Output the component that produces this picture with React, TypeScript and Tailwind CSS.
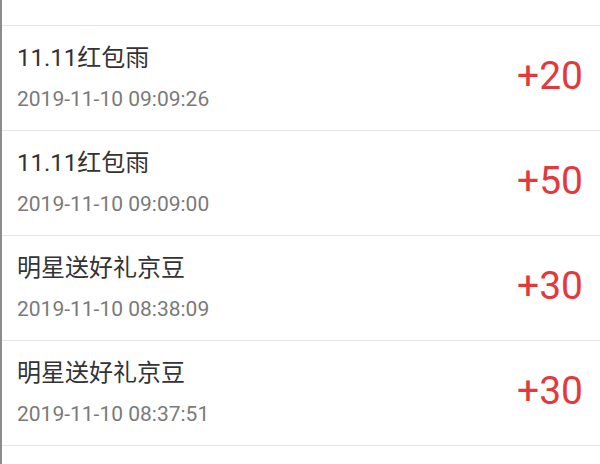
const records = [
  { title: '11.11红包雨', time: '2019-11-10 09:09:26', amount: '+20' },
  { title: '11.11红包雨', time: '2019-11-10 09:09:00', amount: '+50' },
  { title: '明星送好礼京豆', time: '2019-11-10 08:38:09', amount: '+30' },
  { title: '明星送好礼京豆', time: '2019-11-10 08:37:51', amount: '+30' },
];

export default function App() {
  return (
    <div
      className="w-[600px] h-[464px] overflow-hidden bg-white border-l-2 border-[#8c8c8c]"
      style={{ fontFamily: "Roboto, 'Noto Sans CJK SC', sans-serif" }}
    >
      <div className="h-[26px] border-b border-[#e6e6e6]" />
      {records.map((r, i) => (
        <div
          key={i}
          className="h-[105px] border-b border-[#e6e6e6] flex items-center justify-between pl-[15px] pr-[17px]"
        >
          <div className="flex flex-col">
            <span className="text-[24px] leading-[32px] text-[#333333]">{r.title}</span>
            <span className="mt-[10px] text-[21px] leading-[30px] text-[#7a7a7a]">{r.time}</span>
          </div>
          <span className="text-[39px] leading-none text-[#e4393c] -mt-[4px]">{r.amount}</span>
        </div>
      ))}
    </div>
  );
}
